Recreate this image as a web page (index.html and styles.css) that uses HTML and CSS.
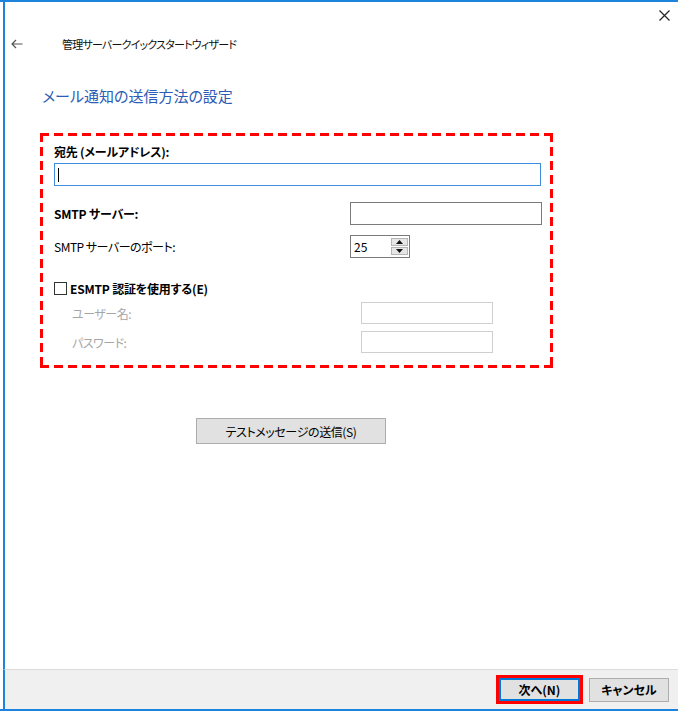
FILE: index.html
```html
<!DOCTYPE html>
<html lang="ja">
<head>
<meta charset="utf-8">
<title>管理サーバークイックスタートウィザード</title>
<link rel="stylesheet" href="styles.css">
</head>
<body>
<div class="app">
  <div class="main">
    <button class="close" aria-label="閉じる">
      <svg width="11" height="11" viewBox="0 0 11 11"><path d="M0.5 0.5 L10.5 10.5 M10.5 0.5 L0.5 10.5" stroke="#222" stroke-width="1.2" fill="none"/></svg>
    </button>
    <div class="header">
      <span class="back">
        <svg width="12" height="10" viewBox="0 0 12 10"><path d="M11.5 5 H1 M5 1 L1 5 L5 9" stroke="#555" stroke-width="1.2" fill="none"/></svg>
      </span>
      <span class="wizard-title">管理サーバークイックスタートウィザード</span>
    </div>
    <h1 class="heading">メール通知の送信方法の設定</h1>

    <div class="box">
      <div class="label bold">宛先 (メールアドレス):</div>
      <div class="input input-focus"><span class="caret"></span></div>

      <div class="row row-server">
        <span class="label bold">SMTP サーバー:</span>
        <div class="input input-server"></div>
      </div>

      <div class="row row-port">
        <span class="label">SMTP サーバーのポート:</span>
        <div class="spin">
          <span class="spin-value">25</span>
          <span class="spin-buttons">
            <span class="spin-btn"><svg width="7" height="4" viewBox="0 0 7 4"><path d="M0 4 L3.5 0 L7 4 Z" fill="#111"/></svg></span>
            <span class="spin-btn"><svg width="7" height="4" viewBox="0 0 7 4"><path d="M0 0 L3.5 4 L7 0 Z" fill="#111"/></svg></span>
          </span>
        </div>
      </div>

      <div class="row row-check">
        <span class="checkbox"></span>
        <span class="label bold">ESMTP 認証を使用する(E)</span>
      </div>

      <div class="row row-sub row-user">
        <span class="label disabled">ユーザー名:</span>
        <div class="input input-disabled"></div>
      </div>
      <div class="row row-sub row-pass">
        <span class="label disabled">パスワード:</span>
        <div class="input input-disabled"></div>
      </div>
    </div>

    <button class="btn btn-test">テストメッセージの送信(S)</button>
  </div>
  <div class="footer">
    <span class="highlight"><button class="btn btn-next">次へ(N)</button></span>
    <button class="btn btn-cancel">キャンセル</button>
  </div>
</div>
</body>
</html>
```

FILE: styles.css
```css
* { box-sizing: border-box; }
html, body { margin: 0; padding: 0; background: #ffffff; }
body {
  font-family: "Noto Sans CJK JP", "Noto Sans", sans-serif;
  font-feature-settings: "palt";
  font-size: 12px;
  color: #000;
}
.app {
  width: 678px;
  height: 711px;
  border-top: 2px solid #1c84dc;
  border-bottom: 2px solid #1c84dc;
  display: flex;
  flex-direction: column;
}
.main {
  flex: 1;
  margin-left: 3px;
  border-left: 2px solid #1c84dc;
  position: relative;
  display: flex;
  flex-direction: column;
  align-items: flex-start;
}
.close {
  position: absolute;
  top: 7px;
  right: 7px;
  width: 13px;
  height: 13px;
  padding: 0;
  border: 0;
  background: transparent;
  display: flex;
  align-items: center;
  justify-content: center;
}
.header {
  display: flex;
  align-items: center;
  height: 16px;
  margin-top: 34px;
  padding-left: 6px;
}
.back { width: 12px; height: 10px; display: flex; }
.wizard-title {
  margin-left: 39px;
  font-size: 11px;
  letter-spacing: -0.8px;
  line-height: 16px;
  color: #111;
}
.heading {
  margin: 33px 0 0 37px;
  font-size: 15px;
  line-height: 22px;
  font-weight: normal;
  color: #2c5cb6;
}
.box {
  margin: 26px 0 0 35px;
  width: 513px;
  height: 235px;
  padding: 11px 3px 0 14px;
  background:
    repeating-linear-gradient(90deg, #ff0000 0 9px, transparent 9px 14px) left top / 100% 3px no-repeat,
    repeating-linear-gradient(90deg, #ff0000 0 9px, transparent 9px 14px) left bottom / 100% 3px no-repeat,
    repeating-linear-gradient(180deg, #ff0000 0 9px, transparent 9px 14px) left top / 3px 100% no-repeat,
    repeating-linear-gradient(180deg, #ff0000 0 9px, transparent 9px 14px) right top / 3px 100% no-repeat;
}
.label { line-height: 15px; white-space: nowrap; letter-spacing: -0.5px; }
.bold { font-weight: bold; letter-spacing: -0.2px; }
.disabled { color: #a6a6a6; }
.input {
  height: 23px;
  border: 1px solid #7a7a7a;
  background: #fff;
}
.input-focus {
  margin-top: 4px;
  width: 487px;
  border-color: #3d8ee0;
  display: flex;
  align-items: center;
  padding-left: 3px;
}
.caret { width: 1px; height: 14px; background: #000; }
.row { display: flex; align-items: center; }
.row-server { margin-top: 16px; height: 23px; }
.row-server .input { margin-left: auto; margin-right: 8px; width: 192px; }
.row-port { margin-top: 10px; height: 23px; }
.spin {
  margin-left: auto;
  margin-right: 140px;
  width: 60px;
  height: 23px;
  border: 1px solid #7a7a7a;
  display: flex;
  align-items: stretch;
}
.spin-value { flex: 1; padding-left: 3px; line-height: 21px; }
.spin-buttons {
  width: 18px;
  display: flex;
  flex-direction: column;
  padding: 2px 1px 2px 0;
  gap: 1px;
}
.spin-btn {
  flex: 1;
  background: #e6e6e6;
  border: 1px solid #b4b4b4;
  display: flex;
  align-items: center;
  justify-content: center;
}
.row-check { margin-top: 22px; height: 16px; }
.checkbox {
  width: 13px;
  height: 13px;
  border: 1px solid #333;
  background: #fff;
  margin-right: 3px;
}
.row-sub { padding-left: 18px; height: 22px; }
.row-user { margin-top: 6px; }
.row-pass { margin-top: 7px; }
.input-disabled {
  margin-left: auto;
  margin-right: 57px;
  width: 132px;
  height: 22px;
  border-color: #cfcfcf;
}
.btn {
  font-family: inherit;
  font-feature-settings: "palt";
  font-size: 12px;
  color: #000;
  background: #e1e1e1;
  border: 1px solid #adadad;
  padding: 0;
  margin: 0;
}
.btn-test {
  margin: 50px 0 0 191px;
  width: 190px;
  height: 26px;
  letter-spacing: -0.4px;
}
.footer {
  height: 40px;
  margin-left: 3px;
  border-left: 2px solid #1c84dc;
  border-top: 1px solid #dcdcdc;
  background: #f0f0f0;
  display: flex;
  align-items: center;
  justify-content: flex-end;
  padding-right: 9px;
  gap: 6px;
}
.highlight {
  display: flex;
  border: 3px solid #ff0000;
}
.btn-next {
  width: 81px;
  height: 23px;
  border: 2px solid #0078d7;
  font-weight: bold;
}
.btn-cancel {
  width: 80px;
  height: 24px;
  font-weight: bold;
}
```
